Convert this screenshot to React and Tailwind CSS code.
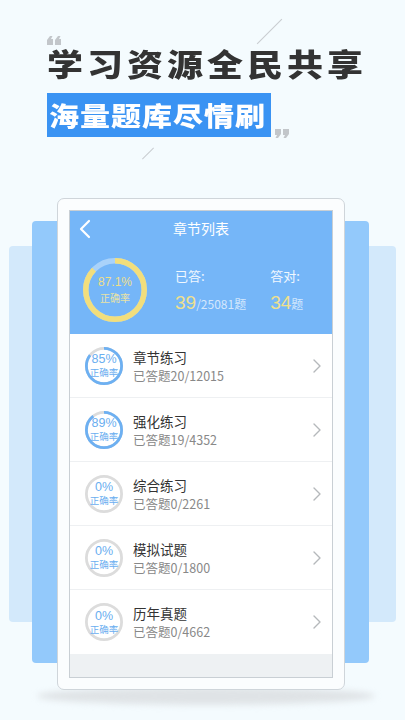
import React from "react";

const CJK = { fontFamily: '"Noto Sans CJK SC", "Noto Sans", sans-serif' };

function Ring({ size, stroke, pct, color, track }) {
  const r = (size - stroke) / 2;
  const c = 2 * Math.PI * r;
  return (
    <svg width={size} height={size} className="absolute inset-0 -rotate-90">
      <circle cx={size / 2} cy={size / 2} r={r} fill="none" stroke={track} strokeWidth={stroke} />
      <circle
        cx={size / 2}
        cy={size / 2}
        r={r}
        fill="none"
        stroke={color}
        strokeWidth={stroke}
        strokeDasharray={`${(c * pct) / 100} ${c}`}
      />
    </svg>
  );
}

const rows = [
  { pct: 85, title: "章节练习", sub: "已答题20/12015" },
  { pct: 89, title: "强化练习", sub: "已答题19/4352" },
  { pct: 0, title: "综合练习", sub: "已答题0/2261" },
  { pct: 0, title: "模拟试题", sub: "已答题0/1800" },
  { pct: 0, title: "历年真题", sub: "已答题0/4662" },
];

function Chevron({ className }) {
  return (
    <svg width="8" height="14" viewBox="0 0 8 14" className={className}>
      <path d="M1 1 L7 7 L1 13" fill="none" stroke="currentColor" strokeWidth="1.4" strokeLinecap="round" strokeLinejoin="round" />
    </svg>
  );
}

function OpenQuote({ className }) {
  return (
    <svg width="14" height="9" viewBox="0 0 14 9" className={className}>
      <path d="M3 0 L5.5 0 L4 3 L6 3 L6 9 L0 9 L0 4 Z" fill="#c2c6ca" />
      <path d="M11 0 L13.5 0 L12 3 L14 3 L14 9 L8 9 L8 4 Z" fill="#c2c6ca" />
    </svg>
  );
}

function CloseQuote({ className }) {
  return (
    <svg width="14" height="9" viewBox="0 0 14 9" className={className}>
      <path d="M0 0 L6 0 L6 5 L3 9 L0.5 9 L2 6 L0 6 Z" fill="#c2c6ca" />
      <path d="M8 0 L14 0 L14 5 L11 9 L8.5 9 L10 6 L8 6 Z" fill="#c2c6ca" />
    </svg>
  );
}

export default function App() {
  return (
    <div className="relative w-[405px] h-[720px] overflow-hidden bg-[#f4fbfe]" style={CJK}>
      {/* decorative lines */}
      <div className="absolute left-[252px] top-[31px] w-[35px] h-[1px] bg-[#c8ccd0] -rotate-[45deg]" />
      <div className="absolute left-[140px] top-[153px] w-[16px] h-[1px] bg-[#c8ccd0] -rotate-[45deg]" />
      {/* quotes */}
      <OpenQuote className="absolute left-[47px] top-[36px]" />
      <CloseQuote className="absolute left-[275px] top-[129px]" />

      {/* header */}
      <div className="pt-[47px] pl-[47px]">
        <div className="text-[36px] leading-[36px] font-black text-[#333333] tracking-[4px] scale-y-[0.85] origin-top-left whitespace-nowrap">学习资源全民共享</div>
        <div className="mt-[10px] w-[224px] h-[44px] bg-[#3a93f3] flex items-center pl-[2px]">
          <span className="text-[30px] leading-[30px] font-black text-white tracking-[1px] scale-y-[0.88] inline-block whitespace-nowrap">海量题库尽情刷</span>
        </div>
      </div>

      {/* device area */}
      <div className="relative mt-[61px] h-[520px]">
        <div className="absolute left-[9px] right-[9px] top-[48px] h-[376px] bg-[#d3e9fb] rounded-[4px]" />
        <div className="absolute left-[32px] right-[36px] top-[23px] h-[442px] bg-[#93c9fb] rounded-[4px]" />
        <div className="absolute left-[37px] right-[30px] top-[489px] h-[18px] rounded-[50%] bg-[#dfe3e6] blur-[3px]" />

        <div className="relative ml-[57px] w-[288px] h-[492px] bg-[#fbfdfe] border border-[#cfd5da] rounded-[7px] p-[11px]">
          <div className="w-full h-full border border-[#c9cfd4] bg-[#eef1f3] overflow-hidden flex flex-col">
            {/* nav */}
            <div className="bg-[#75b6f8] h-[35px] flex items-center relative shrink-0">
              <svg width="12" height="20" viewBox="0 0 12 20" className="absolute left-[9px] top-[8px]">
                <path d="M10 2 L2 10 L10 18" fill="none" stroke="white" strokeWidth="2.2" strokeLinecap="round" strokeLinejoin="round" />
              </svg>
              <div className="w-full text-center text-white text-[14px]">章节列表</div>
            </div>
            {/* stats */}
            <div className="bg-[#75b6f8] h-[88px] flex items-center shrink-0">
              <div className="relative w-[64px] h-[64px] ml-[13px] flex flex-col items-center justify-center">
                <Ring size={64} stroke={5.5} pct={87.1} color="#f2de7c" track="#a9d2fa" />
                <div className="relative text-[#eedf8a] text-[12px] leading-[14px]" style={{ fontFamily: '"Liberation Sans", sans-serif' }}>87.1%</div>
                <div className="relative text-[#e9e3a6] text-[10px] leading-[14px] mt-[2px]">正确率</div>
              </div>
              <div className="ml-[28px] flex flex-col">
                <div className="text-white/90 text-[13px] leading-[16px]">已答:</div>
                <div className="mt-[9px] flex items-baseline">
                  <span className="text-[#f0e08c] text-[19px] leading-[20px]" style={{ fontFamily: '"Liberation Sans", sans-serif' }}>39</span>
                  <span className="text-white/70 text-[12px]">/25081题</span>
                </div>
              </div>
              <div className="ml-[24px] flex flex-col">
                <div className="text-white/90 text-[13px] leading-[16px]">答对:</div>
                <div className="mt-[9px] flex items-baseline">
                  <span className="text-[#f0e08c] text-[19px] leading-[20px]" style={{ fontFamily: '"Liberation Sans", sans-serif' }}>34</span>
                  <span className="text-white/70 text-[12px]">题</span>
                </div>
              </div>
            </div>
            {/* list */}
            <div className="flex flex-col bg-white">
              {rows.map((r, i) => (
                <div key={i} className={`h-[64px] flex items-center ${i < rows.length - 1 ? "border-b border-[#eef0f2]" : ""}`}>
                  <div className="relative w-[38px] h-[38px] ml-[15px] flex flex-col items-center justify-center shrink-0">
                    <Ring size={38} stroke={2.8} pct={r.pct} color="#6db0f2" track="#dcdcdc" />
                    <div className="relative text-[#6aaef0] text-[12.5px] leading-[13px]" style={{ fontFamily: '"Liberation Sans", sans-serif' }}>{r.pct}%</div>
                    <div className="relative text-[#6aaef0] text-[9.5px] leading-[12px] whitespace-nowrap">正确率</div>
                  </div>
                  <div className="ml-[10px] flex flex-col flex-1">
                    <div className="text-[#333] text-[13.5px] leading-[18px]">{r.title}</div>
                    <div className="text-[#888] text-[12.5px] leading-[17px] mt-[1px]">{r.sub}</div>
                  </div>
                  <Chevron className="text-[#b5b8bb] mr-[11px]" />
                </div>
              ))}
            </div>
            <div className="flex-1 bg-[#eef1f3]" />
          </div>
        </div>
      </div>
    </div>
  );
}
